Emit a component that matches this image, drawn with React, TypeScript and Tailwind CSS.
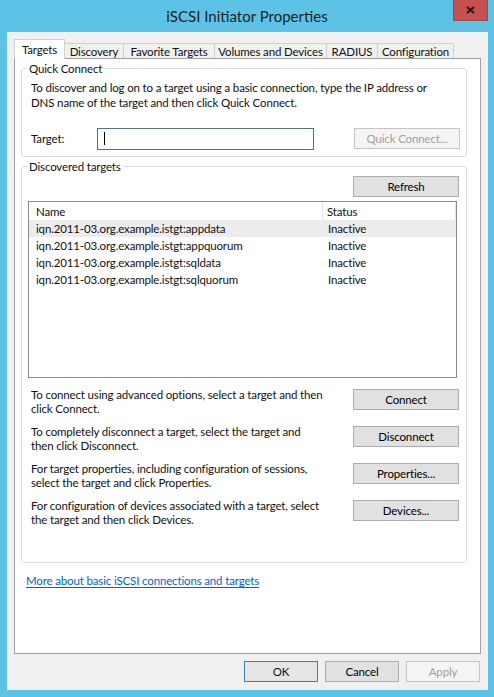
const btn =
  "h-[21px] border border-[#adadad] bg-[#e1e1e1] flex items-center justify-center text-black";
const btnDisabled =
  "h-[21px] border border-[#c5c5c5] bg-[#f4f4f4] flex items-center justify-center text-[#a0a0a0]";

const tabs = [
  { label: "Discovery", w: "w-[60px]" },
  { label: "Favorite Targets", w: "w-[92px]" },
  { label: "Volumes and Devices", w: "w-[113px]" },
  { label: "RADIUS", w: "w-[52px]" },
  { label: "Configuration", w: "w-[77px]" },
];

const targets = [
  "iqn.2011-03.org.example.istgt:appdata",
  "iqn.2011-03.org.example.istgt:appquorum",
  "iqn.2011-03.org.example.istgt:sqldata",
  "iqn.2011-03.org.example.istgt:sqlquorum",
];

const actions = [
  {
    l1: "To connect using advanced options, select a target and then",
    l2: "click Connect.",
    b: "Connect",
  },
  {
    l1: "To completely disconnect a target, select the target and",
    l2: "then click Disconnect.",
    b: "Disconnect",
  },
  {
    l1: "For target properties, including configuration of sessions,",
    l2: "select the target and click Properties.",
    b: "Properties...",
  },
  {
    l1: "For configuration of devices associated with a target, select",
    l2: "the target and then click Devices.",
    b: "Devices...",
  },
];

export default function App() {
  return (
    <div className="w-[494px] h-[697px] bg-[#5dc3e6] flex flex-col font-['Lato',sans-serif] text-[11.5px] tracking-[-0.15px] leading-[15px] text-[#111] select-none">
      {/* Title bar */}
      <div className="h-[32px] relative flex items-center justify-center">
        <span className="text-[15px] tracking-normal text-[#1e1e1e]">iSCSI Initiator Properties</span>
        <div className="absolute top-0 right-[6px] w-[35px] h-[21px] bg-[#c75050] border border-t-0 border-[#a94646] flex items-center justify-center">
          <svg width="9" height="8" viewBox="0 0 9 8">
            <path d="M1 1 L8 7 M8 1 L1 7" stroke="#1b1b1b" strokeWidth="2" />
          </svg>
        </div>
      </div>

      {/* Client area */}
      <div className="flex-1 ml-[7px] mr-[6px] mb-[7px] bg-[#f0f0f0] flex flex-col">
        {/* Tabs */}
        <div className="h-[26px] flex items-end pl-[7px]">
          <div className="relative z-10 -mb-[1px] h-[20px] w-[51px] bg-white border border-b-0 border-[#cfcfcf] flex items-center justify-center whitespace-nowrap">
            Targets
          </div>
          {tabs.map((t) => (
            <div
              key={t.label}
              className={`-ml-[1px] h-[15px] ${t.w} border border-b-0 border-[#cfcfcf] bg-[#f0f0f0] flex items-center justify-center whitespace-nowrap`}
            >
              {t.label}
            </div>
          ))}
        </div>

        {/* Panel */}
        <div className="mx-[7px] h-[596px] bg-white border border-[#a0a0a0] flex flex-col px-[6px]">
          {/* Quick Connect */}
          <fieldset className="mt-[2px] w-[446px] border border-[#dcdcdc] rounded-[3px]">
            <legend className="ml-[5px] px-[2px]">Quick Connect</legend>
            <div className="pl-[9px] pr-[6px] pt-[4px] pb-[7px]">
              <p>
                To discover and log on to a target using a basic connection, type the IP address or
                <br />
                DNS name of the target and then click Quick Connect.
              </p>
              <div className="mt-[18px] flex items-center h-[21px]">
                <span className="w-[66px]">Target:</span>
                <div className="w-[217px] h-[22px] border border-[#56707f] bg-white flex items-center pl-[6px]">
                  <div className="w-[1px] h-[13px] bg-black" />
                </div>
                <div className="flex-1" />
                <div className={`${btnDisabled} w-[106px]`}>Quick Connect...</div>
              </div>
            </div>
          </fieldset>

          {/* Discovered targets */}
          <fieldset className="mt-[2px] w-[446px] border border-[#dcdcdc] rounded-[3px]">
            <legend className="ml-[5px] px-[2px]">Discovered targets</legend>
            <div className="pl-[6px] pr-[7px] pt-[2px] pb-[35px] flex flex-col">
              <div className="flex justify-end">
                <div className={`${btn} w-[106px]`}>Refresh</div>
              </div>
              <div className="mt-[4px] w-[429px] h-[177px] border border-[#8a8a8a] flex flex-col">
                <div className="h-[18px] flex items-center shrink-0">
                  <div className="w-[294px] h-full border-r border-[#e5e5e5] pl-[7px] flex items-center">
                    Name
                  </div>
                  <div className="flex-1 h-full pl-[4px] flex items-center border-r border-[#e5e5e5]">
                    Status
                  </div>
                </div>
                {targets.map((t, i) => (
                  <div
                    key={t}
                    className={`h-[17px] flex items-center shrink-0 ${i === 0 ? "bg-[#ececec]" : ""}`}
                  >
                    <div className="w-[295px] pl-[7px]">{t}</div>
                    <div className="pl-[4px]">Inactive</div>
                  </div>
                ))}
              </div>

              <div className="mt-[10px] flex flex-col gap-[9px]">
                {actions.map((a) => (
                  <div key={a.b} className="flex items-start justify-between">
                    <div className="pl-[3px] leading-[14px]">
                      {a.l1}
                      <br />
                      {a.l2}
                    </div>
                    <div className={`${btn} w-[106px] mt-[1px] shrink-0`}>{a.b}</div>
                  </div>
                ))}
              </div>
            </div>
          </fieldset>

          <div className="mt-[10px] ml-[5px]">
            <span className="text-[#0066cc] underline underline-offset-[2px]">
              More about basic iSCSI connections and targets
            </span>
          </div>
        </div>

        {/* Dialog buttons */}
        <div className="mt-[7px] flex justify-end gap-[7px] pr-[8px]">
          <div className="h-[21px] w-[74px] border border-[#3c7fb1] bg-[#e5e5e5] flex items-center justify-center">
            OK
          </div>
          <div className={`${btn} w-[74px]`}>Cancel</div>
          <div className={`${btnDisabled} w-[74px]`}>Apply</div>
        </div>
      </div>
    </div>
  );
}
